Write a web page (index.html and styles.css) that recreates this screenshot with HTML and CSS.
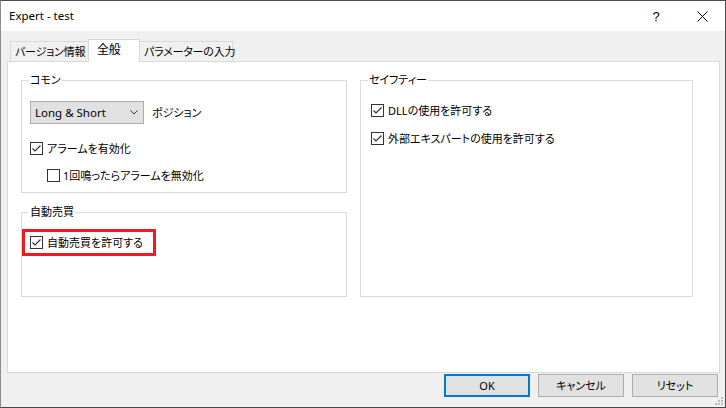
FILE: index.html
```html
<!DOCTYPE html>
<html lang="ja">
<head>
  <meta charset="UTF-8">
  <title>Expert - test</title>
  <link rel="stylesheet" href="styles.css">
</head>
<body>
  <div class="window">
    <div class="titlebar">
      <span class="title">Expert - test</span>
      <div class="caption">
        <span class="cap-btn help">?</span>
        <span class="cap-btn close">
          <svg width="11" height="11" viewBox="0 0 11 11"><path d="M0.5 0.5L10.5 10.5M10.5 0.5L0.5 10.5" stroke="#000" stroke-width="1" fill="none"/></svg>
        </span>
      </div>
    </div>

    <div class="client">
      <div class="tabs">
        <div class="tab tab-version">バージョン情報</div>
        <div class="tab tab-general active">全般</div>
        <div class="tab tab-params">パラメーターの入力</div>
      </div>

      <div class="panel">
        <div class="groups">
          <div class="col-left">
            <fieldset class="group">
              <legend>コモン</legend>
              <div class="common-body">
                <div class="select-row">
                  <div class="select">
                    <span class="select-value">Long &amp; Short</span>
                    <svg width="8" height="5" viewBox="0 0 8 5"><path d="M0.5 0.5L4 4L7.5 0.5" stroke="#333" stroke-width="1" fill="none"/></svg>
                  </div>
                  <span>ポジション</span>
                </div>
                <div class="check first">
                  <span class="box"><svg width="11" height="11" viewBox="0 0 11 11"><path d="M1.5 5.5L4 8L9.5 2.5" stroke="#333" stroke-width="1.2" fill="none"/></svg></span>
                  アラームを有効化
                </div>
                <div class="check sub">
                  <span class="box"></span>
                  1回鳴ったらアラームを無効化
                </div>
              </div>
            </fieldset>

            <fieldset class="group group-auto">
              <legend>自動売買</legend>
              <div class="auto-body">
                <div class="marked">
                  <div class="check">
                    <span class="box"><svg width="11" height="11" viewBox="0 0 11 11"><path d="M1.5 5.5L4 8L9.5 2.5" stroke="#333" stroke-width="1.2" fill="none"/></svg></span>
                    自動売買を許可する
                  </div>
                </div>
              </div>
            </fieldset>
          </div>

          <fieldset class="group group-safety">
            <legend>セイフティー</legend>
            <div class="safety-body">
              <div class="check">
                <span class="box"><svg width="11" height="11" viewBox="0 0 11 11"><path d="M1.5 5.5L4 8L9.5 2.5" stroke="#333" stroke-width="1.2" fill="none"/></svg></span>
                DLLの使用を許可する
              </div>
              <div class="check">
                <span class="box"><svg width="11" height="11" viewBox="0 0 11 11"><path d="M1.5 5.5L4 8L9.5 2.5" stroke="#333" stroke-width="1.2" fill="none"/></svg></span>
                外部エキスパートの使用を許可する
              </div>
            </div>
          </fieldset>
        </div>
      </div>

      <div class="buttons">
        <div class="btn default">OK</div>
        <div class="btn">キャンセル</div>
        <div class="btn">リセット</div>
      </div>
    </div>

    <svg class="grip" width="10" height="10" viewBox="0 0 10 10">
      <rect x="7" y="1" width="2" height="2" fill="#bdbdbd"/>
      <rect x="4" y="4" width="2" height="2" fill="#bdbdbd"/>
      <rect x="7" y="4" width="2" height="2" fill="#bdbdbd"/>
      <rect x="1" y="7" width="2" height="2" fill="#bdbdbd"/>
      <rect x="4" y="7" width="2" height="2" fill="#bdbdbd"/>
      <rect x="7" y="7" width="2" height="2" fill="#bdbdbd"/>
    </svg>
  </div>
</body>
</html>
```

FILE: styles.css
```css
body {
  margin: 0;
  background: #f0f0f0;
}
.window {
  position: relative;
  width: 726px;
  height: 408px;
  box-sizing: border-box;
  border: 1px solid #4a4a4a;
  border-left-color: #8c8c8c;
  background: #f0f0f0;
  display: flex;
  flex-direction: column;
  font: 11px/16px "Noto Sans", "Noto Sans CJK JP", sans-serif;
  font-feature-settings: "palt";
  color: #000;
}
.titlebar {
  height: 30px;
  background: #fff;
  display: flex;
  align-items: center;
  justify-content: space-between;
  padding-left: 8px;
}
.title {
  font-size: 11.5px;
}
.caption {
  display: flex;
  height: 100%;
}
.cap-btn {
  width: 46px;
  display: flex;
  align-items: center;
  justify-content: center;
}
.help {
  font: 13px "Liberation Sans", sans-serif;
}
.client {
  flex: 1;
  display: flex;
  flex-direction: column;
}
.tabs {
  display: flex;
  align-items: flex-end;
  height: 22px;
  margin: 8px 0 0 9px;
  position: relative;
  z-index: 1;
}
.tab {
  height: 20px;
  box-sizing: border-box;
  border: 1px solid #d9d9d9;
  border-bottom: 0;
  background: #f0f0f0;
  line-height: 19px;
  padding-left: 4px;
  white-space: nowrap;
  letter-spacing: -0.2px;
}
.tab + .tab {
  margin-left: -1px;
}
.tab-version {
  width: 79px;
}
.tab-general {
  width: 52px;
}
.tab-params {
  width: 94px;
}
.tab.active {
  height: 23px;
  margin-bottom: -1px;
  background: #fff;
  padding-left: 8px;
  line-height: 20px;
  font-size: 12px;
}
.panel {
  margin-left: 6px;
  width: 713px;
  height: 312px;
  box-sizing: border-box;
  border: 1px solid #d9d9d9;
  background: #fff;
  padding: 10px 0 0 13px;
}
.groups {
  display: flex;
  gap: 13px;
}
.col-left {
  width: 326px;
}
.group {
  margin: 0;
  padding: 0;
  min-width: 0;
  border: 1px solid #dcdcdc;
}
.group legend {
  margin-left: 7px;
  padding: 0 1px;
  line-height: 16px;
}
.group-auto {
  margin-top: 11px;
}
.group-safety {
  width: 333px;
  box-sizing: border-box;
}
.common-body {
  padding: 13px 8px 9px 8px;
}
.select-row {
  display: flex;
  align-items: center;
  gap: 8px;
  height: 23px;
}
.select {
  width: 114px;
  height: 23px;
  box-sizing: border-box;
  border: 1px solid #adadad;
  background: #e1e1e1;
  display: flex;
  align-items: center;
  justify-content: space-between;
  padding: 0 5px 0 4px;
}
.select-value {
  font-size: 11.5px;
}
.check {
  display: flex;
  align-items: center;
  gap: 4px;
  height: 15px;
  white-space: nowrap;
}
.box {
  width: 13px;
  height: 13px;
  box-sizing: border-box;
  border: 1px solid #333;
  background: #fff;
  display: flex;
  align-items: center;
  justify-content: center;
  flex: none;
}
.check.first {
  margin-top: 17px;
}
.check.sub {
  margin-top: 12px;
  margin-left: 17px;
  gap: 3px;
}
.auto-body {
  padding: 9px 0 40px 0;
}
.marked {
  width: 134px;
  height: 27px;
  box-sizing: border-box;
  border: 3px solid #ed1c24;
  padding-left: 5px;
  display: flex;
  align-items: center;
}
.safety-body {
  padding: 15px 0 0 10px;
  display: flex;
  flex-direction: column;
  gap: 13px;
}
.buttons {
  display: flex;
  justify-content: flex-end;
  gap: 8px;
  margin: 1px 7px 0 0;
}
.btn {
  width: 86px;
  height: 23px;
  box-sizing: border-box;
  border: 1px solid #adadad;
  background: #e1e1e1;
  display: flex;
  align-items: center;
  justify-content: center;
}
.btn.default {
  border: 2px solid #0078d7;
}
.grip {
  position: absolute;
  right: 1px;
  bottom: 1px;
}
```
